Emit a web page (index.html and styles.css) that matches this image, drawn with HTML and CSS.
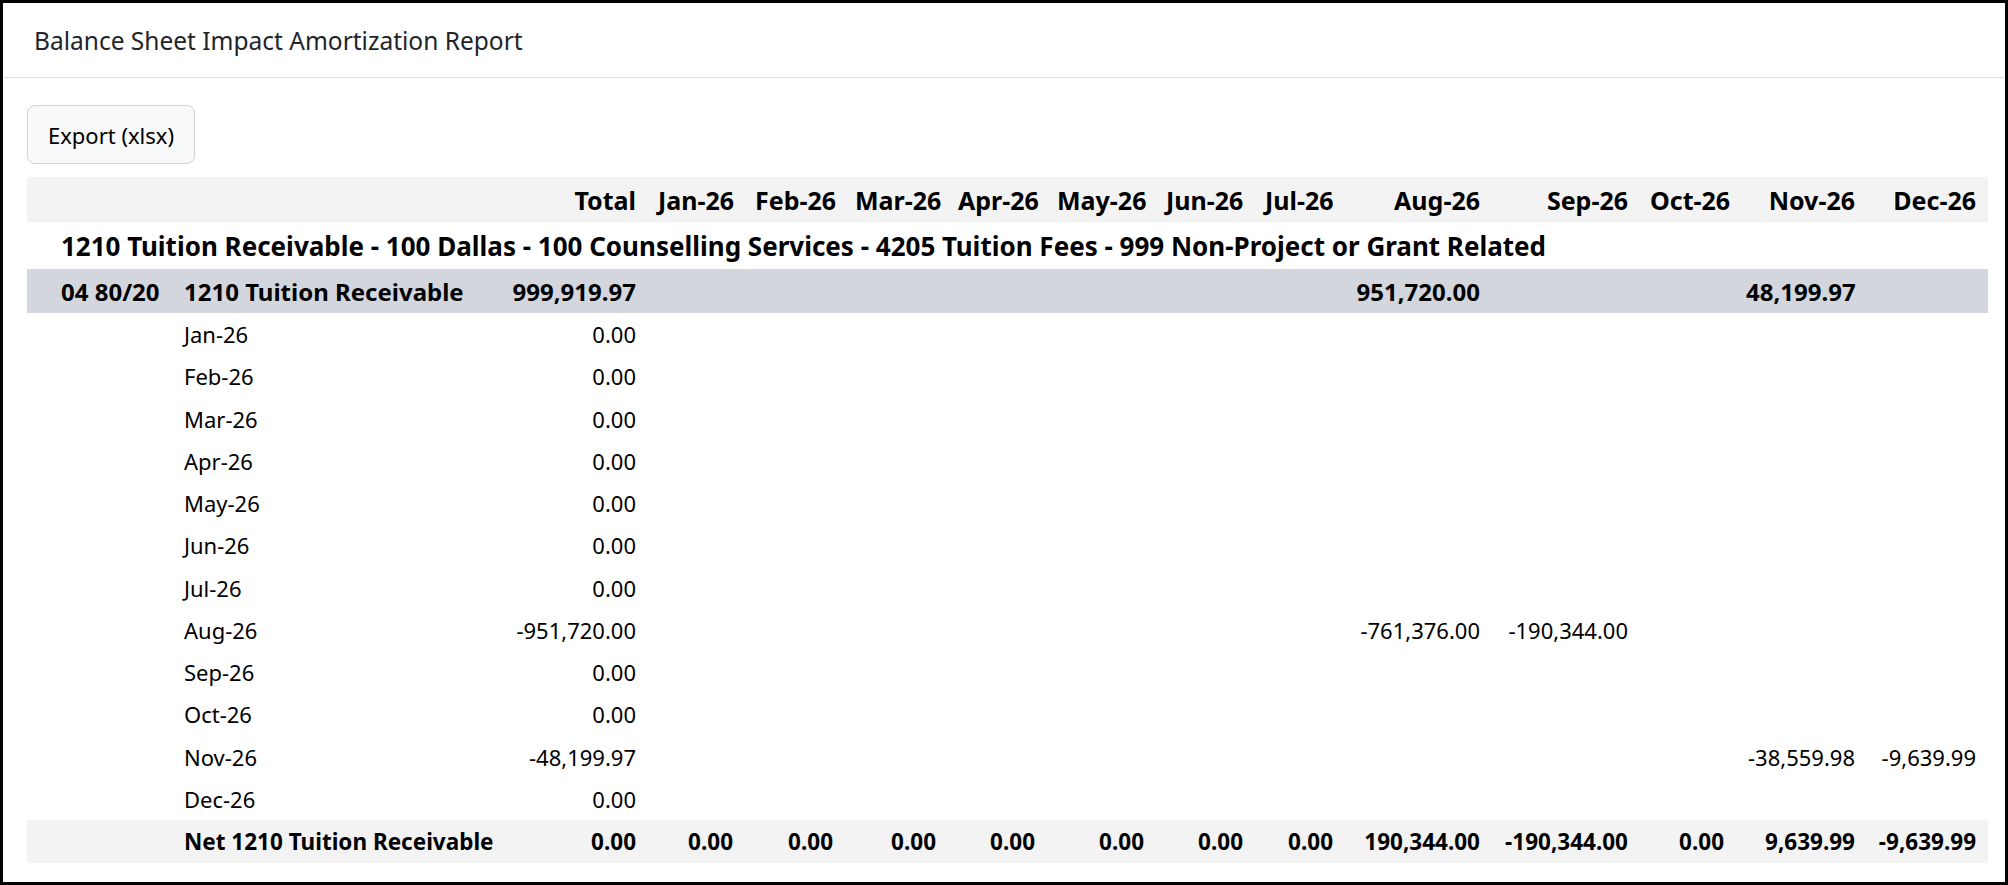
FILE: index.html
```html
<!DOCTYPE html>
<html lang="en">
<head>
<meta charset="utf-8">
<title>Balance Sheet Impact Amortization Report</title>
<link rel="stylesheet" href="styles.css">
</head>
<body>
<div class="card">
  <div class="card-header">Balance Sheet Impact Amortization Report</div>
  <div class="card-body">
    <button class="btn" type="button">Export (xlsx)</button>
    <table class="report">
      <colgroup>
        <col class="w-code"><col class="w-name"><col class="w-total">
        <col class="w-jan"><col class="w-feb"><col class="w-mar"><col class="w-apr">
        <col class="w-may"><col class="w-jun"><col class="w-jul"><col class="w-aug">
        <col class="w-sep"><col class="w-oct"><col class="w-nov"><col class="w-dec">
      </colgroup>
      <thead>
        <tr class="head-row">
          <th></th><th></th><th class="num">Total</th>
          <th class="num">Jan-26</th><th class="num">Feb-26</th><th class="num">Mar-26</th><th class="num">Apr-26</th>
          <th class="num">May-26</th><th class="num">Jun-26</th><th class="num">Jul-26</th><th class="num">Aug-26</th>
          <th class="num">Sep-26</th><th class="num">Oct-26</th><th class="num">Nov-26</th><th class="num">Dec-26</th>
        </tr>
      </thead>
      <tbody>
        <tr class="group-row">
          <td colspan="15" class="code">1210 Tuition Receivable - 100 Dallas - 100 Counselling Services - 4205 Tuition Fees - 999 Non-Project or Grant Related</td>
        </tr>
        <tr class="account-row">
          <td class="code">04 80/20</td><td class="name">1210 Tuition Receivable</td><td class="num">999,919.97</td>
          <td></td><td></td><td></td><td></td><td></td><td></td><td></td>
          <td class="num">951,720.00</td><td></td><td></td><td class="num">48,199.97</td><td></td>
        </tr>
        <tr class="detail-row"><td></td><td class="name">Jan-26</td><td class="num">0.00</td><td colspan="12"></td></tr>
        <tr class="detail-row"><td></td><td class="name">Feb-26</td><td class="num">0.00</td><td colspan="12"></td></tr>
        <tr class="detail-row"><td></td><td class="name">Mar-26</td><td class="num">0.00</td><td colspan="12"></td></tr>
        <tr class="detail-row"><td></td><td class="name">Apr-26</td><td class="num">0.00</td><td colspan="12"></td></tr>
        <tr class="detail-row"><td></td><td class="name">May-26</td><td class="num">0.00</td><td colspan="12"></td></tr>
        <tr class="detail-row"><td></td><td class="name">Jun-26</td><td class="num">0.00</td><td colspan="12"></td></tr>
        <tr class="detail-row"><td></td><td class="name">Jul-26</td><td class="num">0.00</td><td colspan="12"></td></tr>
        <tr class="detail-row">
          <td></td><td class="name">Aug-26</td><td class="num">-951,720.00</td>
          <td></td><td></td><td></td><td></td><td></td><td></td><td></td>
          <td class="num">-761,376.00</td><td class="num">-190,344.00</td><td></td><td></td><td></td>
        </tr>
        <tr class="detail-row"><td></td><td class="name">Sep-26</td><td class="num">0.00</td><td colspan="12"></td></tr>
        <tr class="detail-row"><td></td><td class="name">Oct-26</td><td class="num">0.00</td><td colspan="12"></td></tr>
        <tr class="detail-row">
          <td></td><td class="name">Nov-26</td><td class="num">-48,199.97</td>
          <td></td><td></td><td></td><td></td><td></td><td></td><td></td>
          <td></td><td></td><td></td><td class="num">-38,559.98</td><td class="num">-9,639.99</td>
        </tr>
        <tr class="detail-row"><td></td><td class="name">Dec-26</td><td class="num">0.00</td><td colspan="12"></td></tr>
      </tbody>
      <tfoot>
        <tr class="net-row">
          <td></td><td class="name">Net 1210 Tuition Receivable</td><td class="num">0.00</td>
          <td class="num">0.00</td><td class="num">0.00</td><td class="num">0.00</td><td class="num">0.00</td>
          <td class="num">0.00</td><td class="num">0.00</td><td class="num">0.00</td><td class="num">190,344.00</td>
          <td class="num">-190,344.00</td><td class="num">0.00</td><td class="num">9,639.99</td><td class="num">-9,639.99</td>
        </tr>
      </tfoot>
    </table>
  </div>
</div>
</body>
</html>
```

FILE: styles.css
```css
* { box-sizing: border-box; }

html, body {
  margin: 0;
  padding: 0;
  background: #ffffff;
}

body {
  font-family: "Segoe UI", "Noto Sans", "Open Sans", sans-serif;
  color: #000000;
}

.card {
  width: 2008px;
  height: 885px;
  border: 3px solid #000000;
  background: #ffffff;
  display: flex;
  flex-direction: column;
}

.card-header {
  height: 75px;
  padding: 0 31px;
  display: flex;
  align-items: center;
  font-size: 24.5px;
  color: #212529;
  border-bottom: 1px solid #dcdcdc;
  background: #ffffff;
}

.card-body {
  padding: 27px 17px 0 24px;
}

.btn {
  display: block;
  width: 168px;
  height: 59px;
  padding: 0;
  font-family: inherit;
  font-size: 22px;
  color: #000000;
  background: #f8f9fa;
  border: 1px solid #d0d2d4;
  border-radius: 8px;
}

.report {
  margin-top: 13px;
  width: 1961px;
  table-layout: fixed;
  border-collapse: collapse;
  font-size: 22px;
}

.report th,
.report td {
  padding: 0 12px 0 10px;
  white-space: nowrap;
  overflow: visible;
}

.report .num { text-align: right; }
.report .code { text-align: left; padding-left: 34px; }
.report .name { text-align: left; }

.w-code  { width: 147px; }
.w-name  { width: 316px; }
.w-total { width: 158px; }
.w-jan   { width: 97px; }
.w-feb   { width: 100px; }
.w-mar   { width: 103px; }
.w-apr   { width: 99px; }
.w-may   { width: 109px; }
.w-jun   { width: 99px; }
.w-jul   { width: 90px; }
.w-aug   { width: 147px; }
.w-sep   { width: 148px; }
.w-oct   { width: 96px; }
.w-nov   { width: 131px; }
.w-dec   { width: 121px; }

.head-row {
  height: 45px;
  background: #f3f3f3;
  font-size: 25px;
}

.head-row th { font-weight: 700; }

.group-row {
  height: 47px;
  font-weight: 700;
  font-size: 26px;
}

.account-row {
  height: 44px;
  background: #d3d6dd;
  font-weight: 700;
  font-size: 24px;
}

.detail-row {
  height: 42.25px;
}

.net-row {
  height: 43px;
  background: #f3f3f3;
  font-weight: 700;
  font-size: 22.5px;
}
```
